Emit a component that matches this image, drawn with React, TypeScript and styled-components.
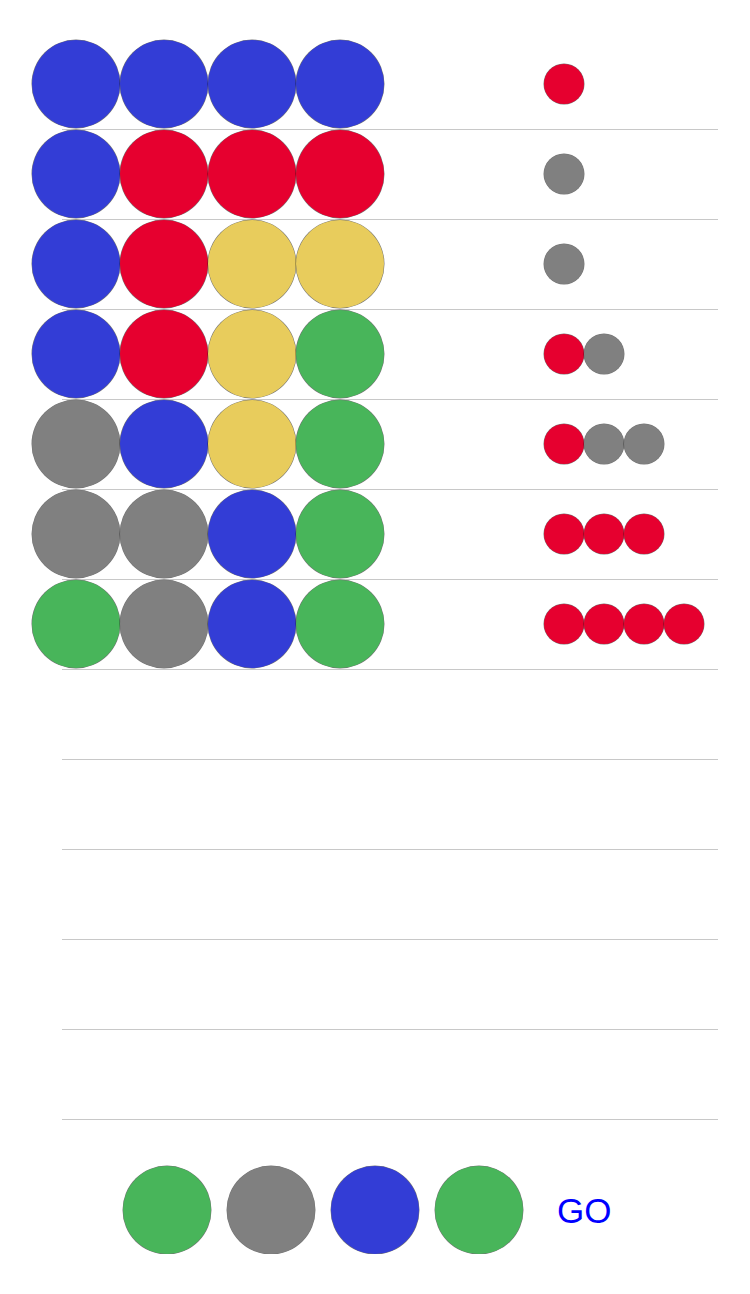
import React from "react";
import styled, { createGlobalStyle } from "styled-components";

const GlobalStyle = createGlobalStyle`
  html, body { margin: 0; padding: 0; background: #ffffff; }
  body { font-family: "Liberation Sans", Arial, sans-serif; }
`;

type Color = "blue" | "red" | "yellow" | "green" | "gray";

const palette: Record<Color, string> = {
  blue: "#333dd6",
  red: "#e6002f",
  yellow: "#e8cc5c",
  green: "#48b55a",
  gray: "#808080",
};

const Page = styled.div`
  width: 750px;
  padding-top: 40px;
  display: flex;
  flex-direction: column;
`;

const Board = styled.div`
  display: flex;
  flex-direction: column;
`;

const Row = styled.div`
  display: flex;
  flex-direction: column;
`;

const RowBody = styled.div`
  height: 88px;
  display: flex;
  align-items: center;
  padding-left: 32px;
`;

const Separator = styled.div`
  height: 1px;
  margin: 1px 32px 0 62px;
  background: #c8c8c8;
`;

const Guess = styled.div`
  display: flex;
  width: 352px;
`;

const Peg = styled.div<{ $c: Color; $size: number }>`
  width: ${(p) => p.$size}px;
  height: ${(p) => p.$size}px;
  border-radius: 50%;
  box-sizing: border-box;
  background: ${(p) => palette[p.$c]};
  box-shadow: 0 0 0 0.5px rgba(0, 0, 0, 0.55);
  flex: none;
`;

const Feedback = styled.div`
  display: flex;
  margin-left: 160px;
`;

const Controls = styled.div`
  display: flex;
  align-items: center;
  gap: 16px;
  padding: 46px 0 0 123px;
`;

const GoButton = styled.button`
  margin-left: 18px;
  padding: 0;
  border: none;
  background: none;
  font-family: "Liberation Sans", Arial, sans-serif;
  font-size: 35px;
  color: #0000ff;
  line-height: 1;
  cursor: pointer;
`;

const rows: { guess: Color[]; fb: Color[] }[] = [
  { guess: ["blue", "blue", "blue", "blue"], fb: ["red"] },
  { guess: ["blue", "red", "red", "red"], fb: ["gray"] },
  { guess: ["blue", "red", "yellow", "yellow"], fb: ["gray"] },
  { guess: ["blue", "red", "yellow", "green"], fb: ["red", "gray"] },
  { guess: ["gray", "blue", "yellow", "green"], fb: ["red", "gray", "gray"] },
  { guess: ["gray", "gray", "blue", "green"], fb: ["red", "red", "red"] },
  { guess: ["green", "gray", "blue", "green"], fb: ["red", "red", "red", "red"] },
];

const current: Color[] = ["green", "gray", "blue", "green"];

export default function App() {
  const allRows = Array.from({ length: 12 }, (_, i) => rows[i]);
  return (
    <>
      <GlobalStyle />
      <Page>
        <Board>
          {allRows.map((r, i) => (
            <Row key={i}>
              <RowBody>
                {r && (
                  <>
                    <Guess>
                      {r.guess.map((c, j) => (
                        <Peg key={j} $c={c} $size={88} />
                      ))}
                    </Guess>
                    <Feedback>
                      {r.fb.map((c, j) => (
                        <Peg key={j} $c={c} $size={40} />
                      ))}
                    </Feedback>
                  </>
                )}
              </RowBody>
              <Separator />
            </Row>
          ))}
        </Board>
        <Controls>
          {current.map((c, j) => (
            <Peg key={j} $c={c} $size={88} />
          ))}
          <GoButton>GO</GoButton>
        </Controls>
      </Page>
    </>
  );
}
